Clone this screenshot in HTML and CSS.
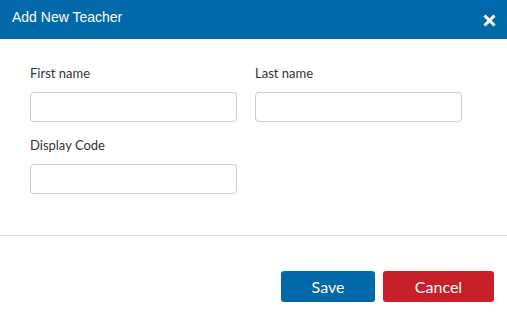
FILE: index.html
```html
<!DOCTYPE html>
<html>
<head>
<meta charset="utf-8">
<link rel="stylesheet" href="styles.css">
</head>
<body>
<div class="modal">
  <div class="header">
    <span class="title">Add New Teacher</span>
    <span class="close"><svg width="13" height="13" viewBox="0 0 13 13"><path d="M1.5 1.5 L11.5 11.5 M11.5 1.5 L1.5 11.5" stroke="#fff" stroke-width="3" stroke-linecap="butt"/></svg></span>
  </div>
  <div class="body">
    <div class="row">
      <div class="field"><label>First name</label><input type="text"></div>
      <div class="field"><label>Last name</label><input type="text"></div>
    </div>
    <div class="row">
      <div class="field"><label>Display Code</label><input type="text"></div>
    </div>
  </div>
  <div class="footer">
    <button class="btn save">Save</button>
    <button class="btn cancel">Cancel</button>
  </div>
</div>
</body>
</html>
```
FILE: styles.css
```css
html, body { margin: 0; padding: 0; background: #fff; }
.modal { width: 507px; height: 334px; }
.header {
  height: 39px;
  background: #0168a9;
  display: flex;
  align-items: center;
  justify-content: space-between;
  padding: 0 11px 0 12px;
  box-sizing: border-box;
}
.title { font-family: "Liberation Sans", Arial, sans-serif; font-size: 14px; color: #fff; margin-top: -5px; }
.close { display: flex; margin-top: 2px; }
.body {
  padding: 26px 30px 0 30px;
  height: 197px;
  box-sizing: border-box;
  border-bottom: 1px solid #e5e5e5;
}
.row { display: flex; gap: 18px; margin-bottom: 15px; }
.field { display: flex; flex-direction: column; width: 207px; }
label {
  font-family: Lato, sans-serif; font-size: 13px; color: #333;
  line-height: 16px; margin-bottom: 11px;
}
input {
  height: 30px; box-sizing: border-box; width: 207px;
  border: 1px solid #ccc; border-radius: 4px; margin: 0; padding: 0 8px;
}
.footer { display: flex; justify-content: flex-end; gap: 8px; padding: 35px 13px 0 0; }
.btn {
  height: 31px; border: none; border-radius: 3px; color: #fff;
  font-family: Lato, sans-serif; font-size: 16px; padding: 0;
}
.save { background: #0168a9; width: 94px; }
.cancel { background: #c8202a; width: 111px; }
```
